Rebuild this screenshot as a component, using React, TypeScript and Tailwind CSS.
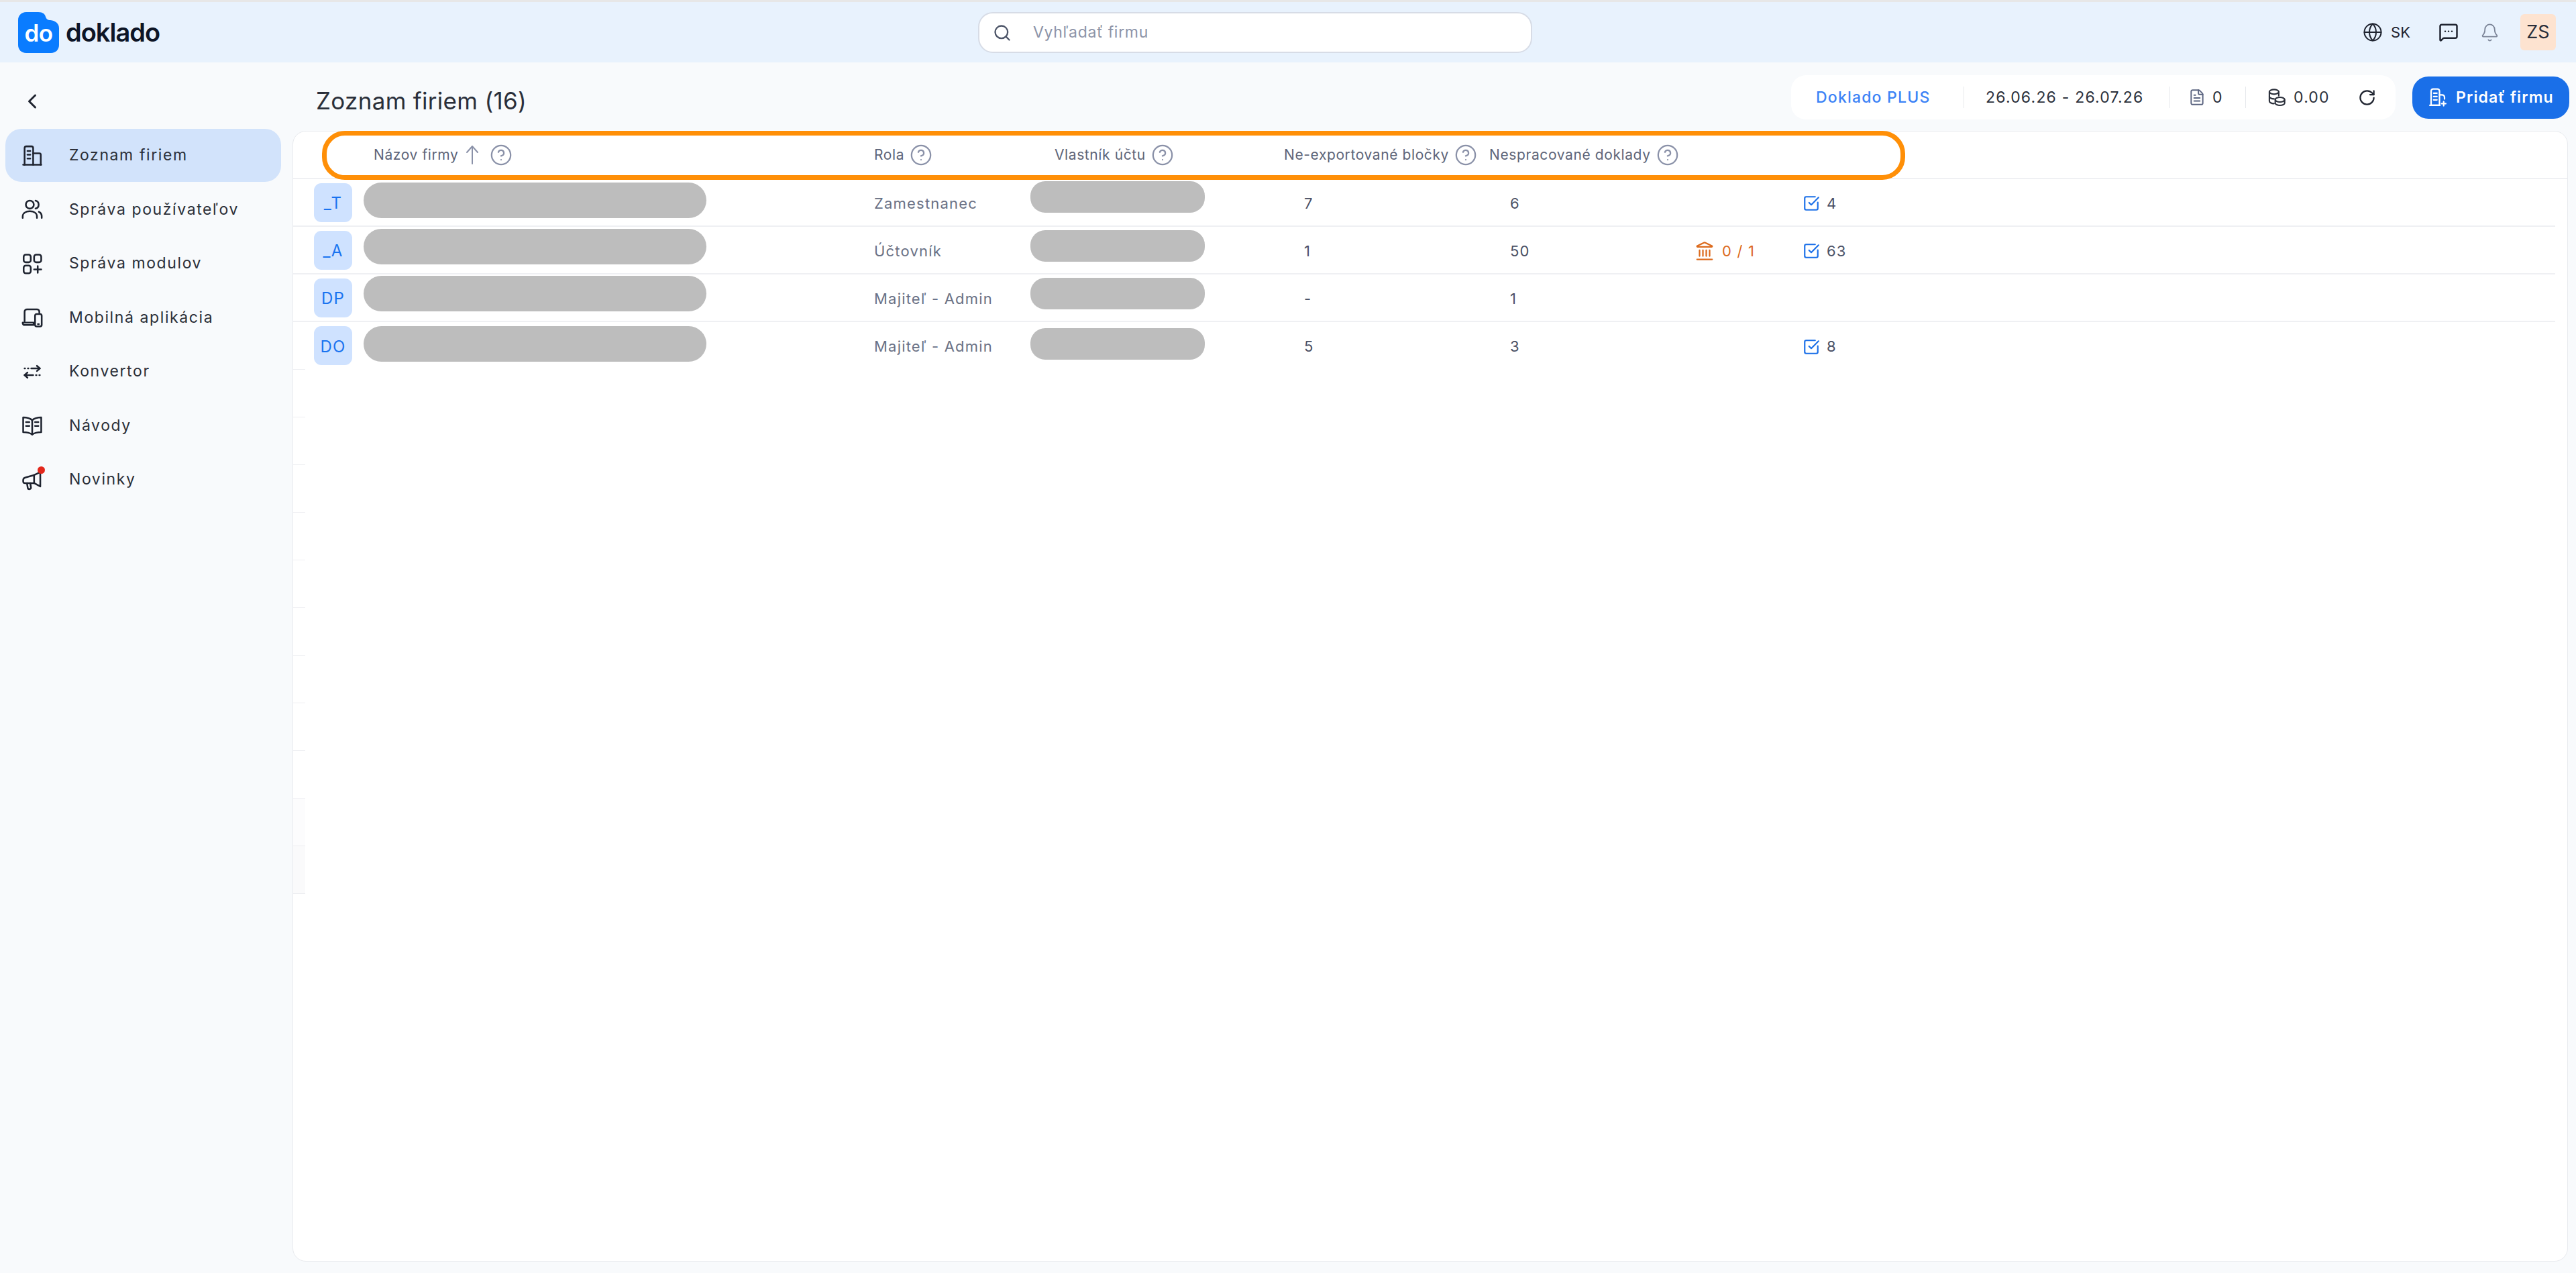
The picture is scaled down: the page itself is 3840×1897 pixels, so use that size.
import { ReactNode } from 'react';
import {
  Bell,
  ChevronLeft,
  CircleHelp,
  FileText,
  Globe,
  Landmark,
  MessageSquareMore,
  RotateCw,
  Search,
  SquareCheckBig
} from 'lucide-react';

const font = "font-['Inter','Noto_Sans',sans-serif]";

function IconBase({ children, className }: { children: ReactNode; className: string }) {
  return (
    <svg
      viewBox="0 0 24 24"
      fill="none"
      stroke="currentColor"
      strokeWidth={1.8}
      strokeLinecap="round"
      strokeLinejoin="round"
      className={className}
    >
      {children}
    </svg>
  );
}

function BuildingIcon() {
  return (
    <IconBase className="w-[34px] h-[34px] text-[#1f2430]">
      <path d="M2.5 21.5h19" />
      <path d="M4 21.5V4a1.8 1.8 0 0 1 1.8-1.8h5.4A1.8 1.8 0 0 1 13 4v17.5" />
      <path d="M13 9.5h6.5a1.5 1.5 0 0 1 1.5 1.5v10.5" />
      <path d="M7 7h3M7 11h3M7 15h3" />
    </IconBase>
  );
}

function UsersIcon() {
  return (
    <IconBase className="w-[34px] h-[34px] text-[#1f2430]">
      <circle cx="9.5" cy="7" r="4.2" />
      <path d="M2 21v-1.5c0-3.4 3-5.5 7.5-5.5s7.5 2.1 7.5 5.5V21" />
      <path d="M15.5 2.9a4.2 4.2 0 0 1 0 8.2" />
      <path d="M19 14.6c1.9.9 3 2.5 3 4.6V21" />
    </IconBase>
  );
}

function ModulesIcon() {
  return (
    <IconBase className="w-[34px] h-[34px] text-[#1f2430]">
      <rect x="3" y="2.5" width="7.5" height="8" rx="2.2" />
      <rect x="14" y="2.5" width="7.5" height="8" rx="2.2" />
      <rect x="3" y="14" width="7.5" height="8" rx="2.2" />
      <path d="M14 18h7.5M17.8 14.5v7" />
    </IconBase>
  );
}

function DevicesIcon() {
  return (
    <IconBase className="w-[34px] h-[34px] text-[#1f2430]">
      <path d="M4 16V6a2.5 2.5 0 0 1 2.5-2.5H17A2.5 2.5 0 0 1 19.5 6v1" />
      <path d="M2 17.5h11.5v2.5H4a2 2 0 0 1-2-2z" />
      <rect x="15" y="8.5" width="7" height="13" rx="1.8" />
      <path d="M18 19h1" />
    </IconBase>
  );
}

function ConvertIcon() {
  return (
    <IconBase className="w-[34px] h-[34px] text-[#1f2430]">
      <path d="M4 8.5h.5M7.5 8.5H8M11 8.5h9" />
      <path d="m17 5.8 3 2.7-3 2.7" />
      <path d="M20 15.5h-.5M16.5 15.5H16M13 15.5H4" />
      <path d="m7 12.8-3 2.7 3 2.7" />
    </IconBase>
  );
}

function BookIcon() {
  return (
    <IconBase className="w-[34px] h-[34px] text-[#1f2430]">
      <path d="M12 6.5C10 4.5 7 3.5 2.5 3.5v15.5c4.5 0 7.5 1 9.5 2.5 2-1.5 5-2.5 9.5-2.5V3.5C17 3.5 14 4.5 12 6.5z" />
      <path d="M12 6.5v15" />
      <path d="M5.5 8.5H9M5.5 12.5H9M15 8.5h3.5M15 12.5h3.5" />
    </IconBase>
  );
}

function MegaphoneIcon() {
  return (
    <div className="relative w-[34px] h-[34px]">
      <IconBase className="w-[34px] h-[34px] text-[#1f2430]">
        <path d="M14 7 5 9.5a3 3 0 0 0-2.5 3v1a2 2 0 0 0 2 2H14z" />
        <path d="M14 7l6.5-3v15L14 15.5" />
        <path d="M6.5 15.5l.8 5a1.5 1.5 0 0 0 1.5 1.3h.4a1.5 1.5 0 0 0 1.5-1.7l-.7-4.6" />
      </IconBase>
      <span className="absolute -top-[3px] right-[-2px] w-[11px] h-[11px] rounded-full bg-[#e3271b]" />
    </div>
  );
}

function CoinsIcon() {
  return (
    <IconBase className="w-[28px] h-[28px] text-[#2a2f3a]">
      <ellipse cx="8.5" cy="5" rx="6" ry="3" />
      <path d="M2.5 5v12c0 1.6 2.5 3 6 3" />
      <path d="M2.5 11c0 1.6 2.5 3 6 3" />
      <path d="M14.5 5v5" />
      <ellipse cx="16" cy="15" rx="6" ry="3" />
      <path d="M10 15v4.5c0 1.5 2.7 2.8 6 2.8s6-1.3 6-2.8V15" />
    </IconBase>
  );
}

function AddCompanyIcon() {
  return (
    <IconBase className="w-[30px] h-[30px] text-white">
      <path d="M4 21.5V4.5A2.5 2.5 0 0 1 6.5 2h5A2.5 2.5 0 0 1 14 4.5v17z" />
      <path d="M2.5 21.5h12" />
      <path d="M7 7h4M7 11h4M7 15h4" />
      <path d="M14 9h3a3 3 0 0 1 3 3v2" />
      <path d="M19 17v5M16.5 19.5h5" />
    </IconBase>
  );
}

function SortArrow() {
  return (
    <svg viewBox="0 0 20 30" fill="none" stroke="currentColor" strokeWidth={2} strokeLinecap="round" strokeLinejoin="round" className="ml-[11px] w-[20px] h-[30px] text-[#8a91a8]">
      <path d="M10 28V2" />
      <path d="M2 11l8-9 8 9" />
    </svg>
  );
}

function Logo() {
  return (
    <div className="flex items-center gap-[10px]">
      <div className="relative w-[61px] h-[61px]">
        <svg viewBox="0 0 61 61" className="w-[61px] h-[61px]">
          <path
            d="M12 0H30C37 0 40 3 41 7C42 10 44 12 48 12C56 13 61 17 61 24V49C61 56 56 61 49 61H12C5 61 0 56 0 49V12C0 5 5 0 12 0Z"
            fill="#0a7cff"
          />
        </svg>
        <span className="absolute inset-0 flex items-center justify-center pt-[3px] text-[35px] leading-none font-semibold text-white tracking-[-0.5px]">
          do
        </span>
      </div>
      <span className="text-[38px] leading-none font-semibold text-[#0d1526] tracking-[-1px]">
        doklado
      </span>
    </div>
  );
}

function Header() {
  return (
    <header className="relative flex items-center justify-between h-[90px] pl-[27px] pr-[30px] bg-[#e8f2fd]">
      <Logo />

      <div className="absolute left-[1458px] top-[15px] flex items-center w-[826px] h-[61px] pl-[20px] bg-white border-2 border-[#d7dce6] rounded-[22px]">
        <Search className="w-[28px] h-[28px] text-[#4d5568]" strokeWidth={2} />
        <span className="ml-[32px] text-[23px] tracking-[0.7px] text-[#8d94a8]">Vyhľadať firmu</span>
      </div>

      <div className="flex items-center">
        <Globe className="w-[30px] h-[30px] text-[#1f2430]" strokeWidth={1.6} />
        <span className="ml-[12px] text-[22px] text-[#1f2430]">SK</span>
        <MessageSquareMore className="ml-[42px] w-[30px] h-[30px] text-[#1f2430]" strokeWidth={2} />
        <Bell className="ml-[32px] w-[29px] h-[29px] text-[#7c8598]" strokeWidth={1.5} />
        <div className="ml-[31px] flex items-center justify-center w-[53px] h-[54px] rounded-[6px] bg-[#fde3d0] text-[27px] text-[#2a2f3a]">
          ZS
        </div>
      </div>
    </header>
  );
}

const navItems = [
  { label: 'Zoznam firiem', icon: <BuildingIcon />, active: true },
  { label: 'Správa používateľov', icon: <UsersIcon /> },
  { label: 'Správa modulov', icon: <ModulesIcon /> },
  { label: 'Mobilná aplikácia', icon: <DevicesIcon /> },
  { label: 'Konvertor', icon: <ConvertIcon /> },
  { label: 'Návody', icon: <BookIcon /> },
  { label: 'Novinky', icon: <MegaphoneIcon /> }
];

function Sidebar() {
  return (
    <aside className="w-[436px] shrink-0 pl-[8px] pr-[17px]">
      <div className="flex items-center h-[99px] pl-[27px]">
        <ChevronLeft className="w-[36px] h-[36px] text-[#1f2430] -ml-[5px] mt-[17px]" strokeWidth={2} />
      </div>
      <nav className="flex flex-col gap-[1.5px]">
        {navItems.map(item => (
          <div
            key={item.label}
            className={`flex items-center h-[79px] pl-[23px] rounded-[24px] ${item.active ? 'bg-[#d2e3fb]' : ''}`}
          >
            {item.icon}
            <span className="ml-[38px] text-[23px] tracking-[1.6px] text-[#2b2f38]">{item.label}</span>
          </div>
        ))}
      </nav>
    </aside>
  );
}

function Toolbar() {
  return (
    <div className="flex items-center mt-[2px]">
      <div className="flex items-center h-[66px] w-[901px] pl-[37px] bg-white rounded-[22px] text-[23px] tracking-[1.2px] text-[#2a2f3a]">
        <span className="w-[220px] font-medium text-[#3b82f6]">Doklado PLUS</span>
        <span className="w-px h-[32px] bg-[#e6e8ec]" />
        <span className="w-[306px] pl-[32px]">26.06.26 - 26.07.26</span>
        <span className="w-px h-[32px] bg-[#e6e8ec]" />
        <FileText className="ml-[27px] w-[26px] h-[28px] text-[#5b6480]" strokeWidth={1.8} />
        <span className="ml-[10px] w-[49px]">0</span>
        <span className="w-px h-[32px] bg-[#e6e8ec]" />
        <span className="ml-[32px]"><CoinsIcon /></span>
        <span className="ml-[11px] w-[96px]">0.00</span>
        <RotateCw className="w-[27px] h-[27px] text-[#1f2430]" strokeWidth={2} />
      </div>
      <button className="ml-[25px] flex items-center w-[234px] h-[63px] pl-[23px] rounded-[24px] bg-[#1a6fe8] text-[23px] font-semibold text-white tracking-[1.1px]">
        <AddCompanyIcon />
        <span className="ml-[12px]">Pridať firmu</span>
      </button>
    </div>
  );
}

const rowGrid = 'grid grid-cols-[866px_269px_342px_306px_306px_161px_1fr] items-center';

function HeaderCell({ label, sort }: { label: string; sort?: boolean }) {
  return (
    <div className="flex items-center text-[21px] tracking-[0.6px] text-[#5d6478]">
      <span>{label}</span>
      {sort && <SortArrow />}
      <CircleHelp className={`${sort ? 'ml-[16px]' : 'ml-[8px]'} w-[34px] h-[34px] text-[#8a91a8]`} strokeWidth={1.6} />
    </div>
  );
}

interface RowData {
  initials: string;
  role: string;
  exported: string;
  docs: string;
  bank?: string;
  tasks?: string;
  nameClass: string;
  ownerClass: string;
}

const rows: RowData[] = [
  { initials: '_T', role: 'Zamestnanec', exported: '7', docs: '6', tasks: '4', nameClass: 'top-[5px]', ownerClass: 'top-[3px]' },
  { initials: '_A', role: 'Účtovník', exported: '1', docs: '50', bank: '0 / 1', tasks: '63', nameClass: 'top-[3px]', ownerClass: 'top-[5px]' },
  { initials: 'DP', role: 'Majiteľ - Admin', exported: '-', docs: '1', nameClass: 'top-[2px]', ownerClass: 'top-[5px]' },
  { initials: 'DO', role: 'Majiteľ - Admin', exported: '5', docs: '3', tasks: '8', nameClass: 'top-[6px]', ownerClass: 'top-[9px]' }
];

function CompanyRow({ row, last }: { row: RowData; last?: boolean }) {
  return (
    <div className={`relative mr-[18px] ${rowGrid} text-[22px] tracking-[1.2px] text-[#6a7185] ${last ? 'h-[70px]' : 'h-[71px] border-b-2 border-[#eff0f3]'}`}>
      <div className="pl-[31px]">
        <div className="flex items-center justify-center w-[57px] h-[58px] pt-[3px] rounded-[11px] bg-[#cfe2ff] text-[24px] text-[#1a73f0]">
          {row.initials}
        </div>
      </div>
      <div className="pt-[3px]">{row.role}</div>
      <div />
      <div className="pl-[30px] pt-[3px] text-[#4a5064]">{row.exported}</div>
      <div className="pl-[31px] pt-[3px] text-[#4a5064]">{row.docs}</div>
      <div className="pt-[3px]">
        {row.bank && (
          <span className="flex items-center text-[#dc6a1c]">
            <Landmark className="w-[30px] h-[30px]" strokeWidth={1.8} />
            <span className="ml-[11px]">{row.bank}</span>
          </span>
        )}
      </div>
      <div className="pt-[3px]">
        {row.tasks && (
          <span className="flex items-center text-[#4a5064]">
            <SquareCheckBig className="w-[26px] h-[26px] text-[#1a6fe8]" strokeWidth={2} />
            <span className="ml-[10px]">{row.tasks}</span>
          </span>
        )}
      </div>
      <span className={`absolute left-[105px] w-[511px] h-[53px] rounded-full bg-[#bdbdbd] ${row.nameClass}`} />
      <span className={`absolute left-[1099px] w-[260px] h-[47px] rounded-[22px] bg-[#bdbdbd] ${row.ownerClass}`} />
    </div>
  );
}

const emptyTints = ['', '', '', '', '', '', '', '', '', 'bg-[#fcfcfd]', 'bg-[#fafafb]'];

function CompanyTable() {
  return (
    <div className="relative flex-1 mr-[12px] mb-[17px] bg-white border border-[#e8eaee] rounded-[20px]">
      <div className={`h-[71px] border-b-2 border-[#eff0f3] ${rowGrid}`}>
        <div className="pl-[120px]"><HeaderCell label="Názov firmy" sort /></div>
        <HeaderCell label="Rola" />
        <HeaderCell label="Vlastník účtu" />
        <HeaderCell label="Ne-exportované bločky" />
        <HeaderCell label="Nespracované doklady" />
      </div>

      {rows.map((row, index) => (
        <CompanyRow key={row.initials} row={row} last={index === rows.length - 1} />
      ))}

      <div className="w-[18px] border-b border-[#eeeff2]" />
      {emptyTints.map((tint, index) => (
        <div key={index} className={`w-[18px] h-[71px] border-b border-[#eeeff2] ${tint}`} />
      ))}

      <div className="absolute left-[43px] -top-px w-[2360px] h-[73px] border-[7px] border-[#ff8f07] rounded-[34px]" />
    </div>
  );
}

export default function App() {
  return (
    <div className={`flex flex-col w-[3840px] h-[1897px] overflow-hidden bg-[#f8fafc] border-t-[3px] border-[#e7e7e7] ${font}`}>
      <Header />
      <div className="flex flex-1 min-h-0">
        <Sidebar />
        <main className="flex flex-col flex-1 min-w-0">
          <div className="flex items-center justify-between h-[102px] pl-[35px] pr-[10px]">
            <h1 className="mt-[12px] text-[35px] font-normal tracking-[0.3px] text-[#2a2f3a]">Zoznam firiem (16)</h1>
            <Toolbar />
          </div>
          <CompanyTable />
        </main>
      </div>
    </div>
  );
}
